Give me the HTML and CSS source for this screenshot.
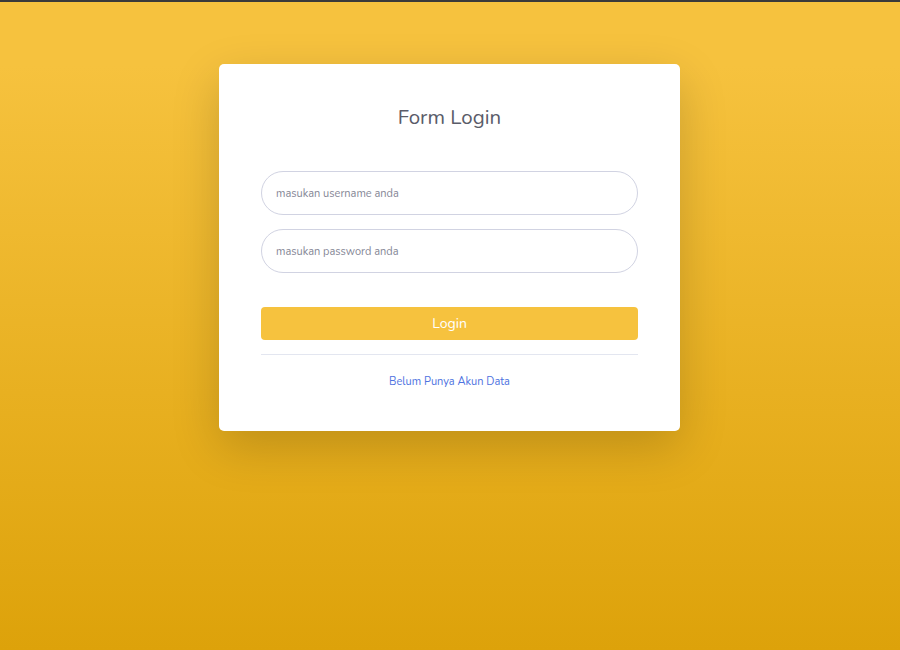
FILE: index.html
```html
<!DOCTYPE html>
<html lang="id">
<head>
<meta charset="utf-8">
<title>Form Login</title>
<link rel="stylesheet" href="styles.css">
</head>
<body>
<div class="topbar"></div>
<main class="page">
  <div class="card">
    <h1 class="title">Form Login</h1>
    <form class="form">
      <input class="field" type="text" placeholder="masukan username anda">
      <input class="field" type="password" placeholder="masukan password anda">
      <button class="btn" type="button">Login</button>
    </form>
    <hr class="divider">
    <div class="links"><a class="link" href="#">Belum Punya Akun Data</a></div>
  </div>
</main>
</body>
</html>
```
FILE: styles.css
```css
* { box-sizing: border-box; }
html, body { margin: 0; height: 100%; }
body {
  font-family: "Nunito", "Lato", "Noto Sans", sans-serif;
  background: linear-gradient(180deg, #f6c23e 10%, #dda20a 100%);
  min-height: 650px;
}
.topbar { height: 2px; background: #3a3a3a; }
.page {
  display: flex;
  justify-content: center;
  padding-top: 62px;
}
.card {
  width: 461px;
  margin-right: 1px;
  background: #fff;
  border-radius: 5px;
  box-shadow: 0 16px 48px rgba(0,0,0,0.175);
  padding: 41px 42px 42px;
}
.title {
  margin: 0 0 42px;
  text-align: center;
  font-size: 20.5px;
  line-height: 24px;
  font-weight: 400;
  color: #5a5c69;
}
.form { display: flex; flex-direction: column; }
.field {
  height: 44px;
  border: 1px solid #d1d3e2;
  border-radius: 22px;
  padding: 0 14px;
  font-family: inherit;
  font-size: 11px;
  color: #6e707e;
  margin-bottom: 14px;
  outline: none;
}
.field::placeholder { color: #858796; }
.field + .field { margin-bottom: 34px; }
.btn {
  height: 33px;
  border: none;
  border-radius: 4px;
  background: #f6c23e;
  color: #fff;
  font-family: inherit;
  font-size: 14px;
}
.divider {
  margin: 14px 0 0;
  border: 0;
  border-top: 1px solid #e3e6f0;
}
.links { text-align: center; padding-top: 18px; line-height: 14px; }
.link {
  color: #4e73df;
  text-decoration: none;
  font-size: 11px;
}
```
